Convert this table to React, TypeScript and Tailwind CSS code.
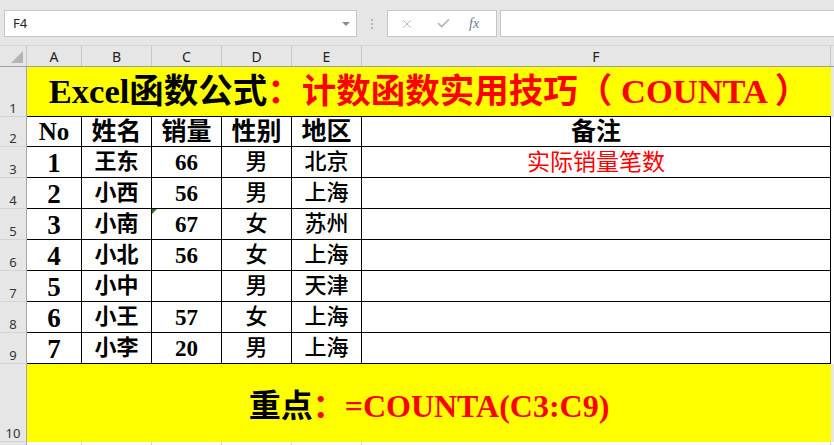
import { X, Check } from "lucide-react";

const colLetters = ["A", "B", "C", "D", "E", "F"];
const colWidths = ["w-[55px]", "w-[70px]", "w-[70px]", "w-[70px]", "w-[70px]", "w-[469px]"];

const rows = [
  ["1", "王东", "66", "男", "北京", "实际销量笔数"],
  ["2", "小西", "56", "男", "上海", ""],
  ["3", "小南", "67", "女", "苏州", ""],
  ["4", "小北", "56", "女", "上海", ""],
  ["5", "小中", "", "男", "天津", ""],
  ["6", "小王", "57", "女", "上海", ""],
  ["7", "小李", "20", "男", "上海", ""],
];

const serif = "font-['Liberation_Serif','Noto_Sans_CJK_SC',serif]";
const ui = "font-['Noto_Sans','Liberation_Sans',sans-serif]";

const RowHead = ({ n, h }: { n: number; h: string }) => (
  <div
    className={`${h} w-[27px] shrink-0 bg-[#e6e6e6] border-r border-r-[#a6a6a6] border-b border-b-[#d4d4d4] flex items-end justify-center pb-[1px] text-[13px] leading-none text-[#333] ${ui}`}
  >
    {n}
  </div>
);

const App = () => {
  return (
    <div className="w-[834px] h-[445px] overflow-hidden bg-white relative">
      {/* formula bar */}
      <div className="h-[46px] bg-[#e6e6e6] flex items-start pt-[10px] border-b border-b-[#d6d6d6]">
        <div className={`ml-[4px] w-[353px] h-[27px] bg-white border border-[#c6c6c6] flex items-center justify-between pl-[8px] pr-[6px] text-[13px] text-[#222] ${ui}`}>
          <span>F4</span>
          <span className="w-0 h-0 border-l-[4px] border-r-[4px] border-t-[4px] border-l-transparent border-r-transparent border-t-[#8a8a8a]" />
        </div>
        <div className="w-[30px] h-[27px] flex flex-col items-center justify-center gap-[2px]">
          <span className="w-[2px] h-[2px] bg-[#b8b8b8]" />
          <span className="w-[2px] h-[2px] bg-[#b8b8b8]" />
          <span className="w-[2px] h-[2px] bg-[#b8b8b8]" />
        </div>
        <div className="w-[110px] h-[27px] bg-white border border-[#c6c6c6] flex items-center">
          <X className="ml-[12px] w-[14px] h-[14px] text-[#b0b0b0]" strokeWidth={1.5} />
          <Check className="ml-[22px] w-[15px] h-[15px] text-[#b0b0b0]" strokeWidth={2.5} />
          <span className={`ml-[18px] text-[14px] italic text-[#6b7b8c] ${serif}`}>fx</span>
        </div>
        <div className="ml-[3px] flex-1 h-[27px] bg-white border-y border-l border-[#c6c6c6]" />
      </div>

      {/* column headers */}
      <div className={`h-[21px] bg-[#e6e6e6] flex border-b border-b-[#9e9e9e] text-[14px] text-[#222] ${ui}`}>
        <div className="w-[27px] shrink-0 border-r border-r-[#c8c8c8] relative">
          <svg className="absolute right-[3px] bottom-[3px]" width="12" height="12" viewBox="0 0 12 12">
            <polygon points="12,0 12,12 0,12" fill="#b4b4b4" />
          </svg>
        </div>
        {colLetters.map((c, i) => (
          <div
            key={c}
            className={`${colWidths[i]} shrink-0 flex items-center justify-center border-r border-r-[#c8c8c8] leading-none pt-[2px]`}
          >
            {c}
          </div>
        ))}
        <div className="flex-1" />
      </div>

      {/* row 1: title */}
      <div className="flex">
        <RowHead n={1} h="h-[50px]" />
        <div className={`h-[50px] w-[804px] bg-[#ffff00] border-b border-black flex items-center justify-center text-[34.5px] font-bold leading-none ${serif}`}>
          <span className="text-black">Excel函数公式</span>
          <span className="text-[#ff0000]">：计数函数实用技巧（ COUNTA ）</span>
        </div>
        <div className="flex-1 bg-[#e6e6e6]" />
      </div>

      {/* row 2: headers */}
      <div className="flex">
        <RowHead n={2} h="h-[30px]" />
        {["No", "姓名", "销量", "性别", "地区", "备注"].map((t, i) => (
          <div
            key={t}
            className={`h-[30px] ${colWidths[i]} shrink-0 border-r border-b border-black flex items-center justify-center text-[25px] font-bold leading-none text-black ${serif}`}
          >
            {t}
          </div>
        ))}
      </div>

      {/* data rows */}
      {rows.map((r, ri) => (
        <div key={ri} className="flex">
          <RowHead n={ri + 3} h="h-[31px]" />
          <div className={`h-[31px] w-[55px] shrink-0 border-r border-b border-black flex items-center justify-center pt-[2px] text-[27px] font-bold leading-none ${serif}`}>
            {r[0]}
          </div>
          <div className={`h-[31px] w-[70px] shrink-0 border-r border-b border-black flex items-center justify-center text-[22px] font-bold leading-none ${serif}`}>
            {r[1]}
          </div>
          <div className={`relative h-[31px] w-[70px] shrink-0 border-r border-b border-black flex items-center justify-center pt-[1px] text-[23px] font-bold leading-none ${serif}`}>
            {ri === 2 && (
              <svg className="absolute left-0 top-0" width="5" height="5" viewBox="0 0 5 5">
                <polygon points="0,0 5,0 0,5" fill="#1f7a1f" />
              </svg>
            )}
            {r[2]}
          </div>
          <div className={`h-[31px] w-[70px] shrink-0 border-r border-b border-black flex items-center justify-center text-[22px] leading-none font-medium ${serif}`}>
            {r[3]}
          </div>
          <div className={`h-[31px] w-[70px] shrink-0 border-r border-b border-black flex items-center justify-center text-[22px] leading-none font-medium ${serif}`}>
            {r[4]}
          </div>
          <div className={`h-[31px] w-[469px] shrink-0 border-r border-b border-black flex items-center justify-center text-[23px] leading-none text-[#ff0000] ${serif}`}>
            {r[5]}
          </div>
        </div>
      ))}

      {/* row 10: key formula */}
      <div className="flex">
        <RowHead n={10} h="h-[78px]" />
        <div className={`h-[78px] w-[804px] bg-[#ffff00] flex items-center justify-center pt-[6px] text-[32px] font-bold leading-none ${serif}`}>
          <span className="text-black">重点</span>
          <span className="text-[#ff0000]">：=COUNTA(C3:C9)</span>
        </div>
        <div className="flex-1 bg-[#e6e6e6]" />
      </div>

      {/* partial row 11 */}
      <div className="flex h-[10px]">
        <div className="w-[27px] shrink-0 bg-[#e6e6e6] border-r border-r-[#a6a6a6]" />
        {colWidths.map((w, i) => (
          <div key={i} className={`${w} shrink-0 border-r border-r-[#d4d4d4]`} />
        ))}
      </div>
    </div>
  );
};

export default App;
